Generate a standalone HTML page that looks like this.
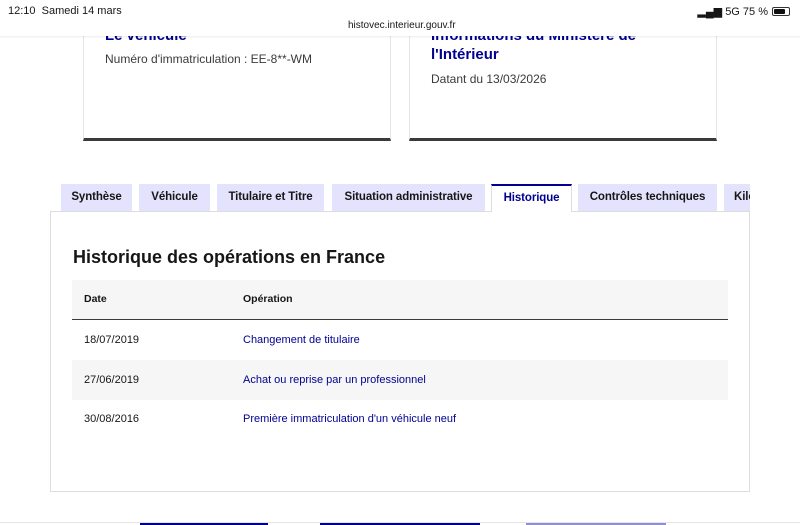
<!DOCTYPE html>
<html><head><meta charset="utf-8"><style>
*{margin:0;padding:0;box-sizing:border-box}
body{width:800px;height:525px;overflow:hidden;background:#fff;font-family:"Liberation Sans",sans-serif;position:relative;color:#161616}
.abs{position:absolute}
.card{position:absolute;top:-20px;height:161px;border:1px solid #e5e5e5;border-bottom:3px solid #3a3a3a;background:#fff}
.tab{position:absolute;top:184px;height:27px;background:#e3e3fd;font-size:11.5px;font-weight:bold;color:#161616;text-align:center;line-height:27px;white-space:nowrap;overflow:hidden;letter-spacing:-0.1px}
</style></head><body>
<div class="card" style="left:83px;width:308px"></div>
<div class="card" style="left:409px;width:308px"></div>
<div class="abs" style="left:105px;top:27px;font-size:15px;font-weight:bold;color:#000091">Le véhicule</div>
<div class="abs" style="left:105px;top:52px;font-size:12px;color:#3a3a3a">Numéro d'immatriculation : EE-8**-WM</div>
<div class="abs" style="left:431px;top:27px;font-size:15px;font-weight:bold;color:#000091">Informations du Ministère de</div>
<div class="abs" style="left:431px;top:46px;font-size:15px;font-weight:bold;color:#000091">l'Intérieur</div>
<div class="abs" style="left:431px;top:72px;font-size:12px;color:#3a3a3a">Datant du 13/03/2026</div>
<div class="abs" style="left:0;top:0;width:800px;height:36px;background:#fff;box-shadow:0 1px 2px rgba(0,0,0,.08)"></div>
<div class="abs" style="left:8px;top:5px;font-size:11px">12:10&nbsp;&nbsp;Samedi 14 mars</div>
<div class="abs" style="left:348px;top:20px;font-size:10px">histovec.interieur.gouv.fr</div>
<div class="abs" style="right:32px;top:5px;font-size:11px;white-space:nowrap">▂▄▆ 5G 75 %</div>
<div class="abs" style="left:772px;top:7px;width:18px;height:9px;border:1px solid #333;border-radius:2px;padding:1px"><div style="width:11px;height:5px;background:#111;border-radius:1px"></div></div>

<div class="abs" style="left:50px;top:211px;width:700px;height:281px;border:1px solid #ddd"></div>
<div class="tab" style="left:61px;width:71px">Synthèse</div>
<div class="tab" style="left:139px;width:71px">Véhicule</div>
<div class="tab" style="left:217px;width:107px">Titulaire et Titre</div>
<div class="tab" style="left:332px;width:153px">Situation administrative</div>
<div class="tab" style="left:491px;width:81px;background:#fff;color:#000091;border-top:2px solid #000091;border-left:1px solid #ddd;border-right:1px solid #ddd;height:28px;line-height:25px">Historique</div>
<div class="tab" style="left:578px;width:139px">Contrôles techniques</div>
<div class="tab" style="left:724px;width:26px;text-align:left;padding-left:10px">Kilométrage</div>

<div class="abs" style="left:73px;top:247px;font-size:18px;font-weight:bold">Historique des opérations en France</div>
<div class="abs" style="left:72px;top:280px;width:656px;height:40px;background:#f6f6f6;border-bottom:1px solid #3a3a3a"></div>
<div class="abs" style="left:84px;top:293px;font-size:10.5px;font-weight:bold">Date</div>
<div class="abs" style="left:243px;top:293px;font-size:10.5px;font-weight:bold">Opération</div>
<div class="abs" style="left:72px;top:360px;width:656px;height:40px;background:#f6f6f6"></div>
<div class="abs" style="left:84px;top:334px;font-size:11px">18/07/2019</div>
<div class="abs" style="left:243px;top:334px;font-size:11px;color:#000091">Changement de titulaire</div>
<div class="abs" style="left:84px;top:374px;font-size:11px">27/06/2019</div>
<div class="abs" style="left:243px;top:374px;font-size:11px;color:#000091">Achat ou reprise par un professionnel</div>
<div class="abs" style="left:84px;top:413px;font-size:11px">30/08/2016</div>
<div class="abs" style="left:243px;top:413px;font-size:11px;color:#000091">Première immatriculation d'un véhicule neuf</div>

<div class="abs" style="left:0;top:522px;width:800px;height:1px;background:#e5e5e5"></div>
<div class="abs" style="left:140px;top:523px;width:128px;height:2px;background:#000091"></div>
<div class="abs" style="left:320px;top:523px;width:160px;height:2px;background:#000091"></div>
<div class="abs" style="left:526px;top:523px;width:140px;height:2px;background:#8e8ed0"></div>
</body></html>
